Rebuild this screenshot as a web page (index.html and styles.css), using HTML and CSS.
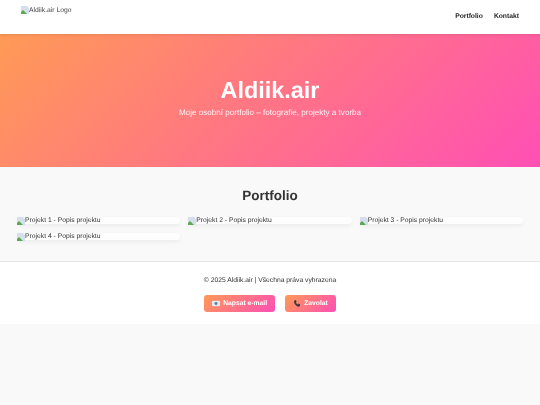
FILE: index.html
```html
<!DOCTYPE html>
<html lang="cs">
<head>
  <meta charset="UTF-8">
  <meta name="viewport" content="width=device-width, initial-scale=1.0">
  <title>Aldiik.air</title>
  <link rel="stylesheet" href="styles.css">
</head>
<body>
  <header class="site-header">
    <div class="logo">
      <svg class="broken-img" viewBox="0 0 8 8"><path d="M0 0h6l2 2v6H0z" fill="#d5deec"/><path d="M0 8V6l2-2 2 2 2 2z" fill="#5aa854"/></svg>Aldiik.air Logo
    </div>
    <nav class="nav">
      <a href="#portfolio">Portfolio</a>
      <a href="#kontakt">Kontakt</a>
    </nav>
  </header>

  <section class="hero">
    <h1>Aldiik.air</h1>
    <p>Moje osobní portfolio – fotografie, projekty a tvorba</p>
  </section>

  <main class="portfolio" id="portfolio">
    <h2>Portfolio</h2>
    <div class="grid">
      <div class="card"><svg class="broken-img" viewBox="0 0 8 8"><path d="M0 0h6l2 2v6H0z" fill="#d5deec"/><path d="M0 8V6l2-2 2 2 2 2z" fill="#5aa854"/></svg>Projekt 1 - Popis projektu</div>
      <div class="card"><svg class="broken-img" viewBox="0 0 8 8"><path d="M0 0h6l2 2v6H0z" fill="#d5deec"/><path d="M0 8V6l2-2 2 2 2 2z" fill="#5aa854"/></svg>Projekt 2 - Popis projektu</div>
      <div class="card"><svg class="broken-img" viewBox="0 0 8 8"><path d="M0 0h6l2 2v6H0z" fill="#d5deec"/><path d="M0 8V6l2-2 2 2 2 2z" fill="#5aa854"/></svg>Projekt 3 - Popis projektu</div>
      <div class="card"><svg class="broken-img" viewBox="0 0 8 8"><path d="M0 0h6l2 2v6H0z" fill="#d5deec"/><path d="M0 8V6l2-2 2 2 2 2z" fill="#5aa854"/></svg>Projekt 4 - Popis projektu</div>
    </div>
  </main>

  <footer class="site-footer" id="kontakt">
    <p>© 2025 Aldiik.air | Všechna práva vyhrazena</p>
    <div class="buttons">
      <a class="btn" href="#"><svg class="btn-icon" viewBox="0 0 10 8"><rect width="10" height="7" y=".5" rx="1" fill="#dfe9f2"/><circle cx="5" cy="4" r="1.8" fill="#5c7f9c"/></svg>Napsat e-mail</a>
      <a class="btn" href="#"><svg class="btn-icon phone" viewBox="0 0 8 8"><path d="M1 .5 2.6 0l1 2-1 .9c.4.9 1.200 1.700 2.100 2.100l.9-1 2 1L7.200 6.800C6.800 8 5 8 3 6.300 1 4.600 0 2 1 .5z" fill="#3a3a3a"/></svg>Zavolat</a>
    </div>
  </footer>
</body>
</html>
```

FILE: styles.css
```css
/* General */
body {
  margin: 0;
  font-family: "Liberation Sans", Arial, sans-serif;
  background-color: #f9f9f9;
  color: #333;
  text-rendering: geometricPrecision;
  filter: blur(0.3px);
}

.broken-img {
  width: 8px;
  height: 8px;
  flex: none;
}

/* Header */
.site-header {
  display: flex;
  justify-content: space-between;
  height: 34px;
  padding: 0 21px;
  background-color: #fff;
  box-shadow: 0 1px 3px rgba(0, 0, 0, 0.1);
  position: relative;
}

.logo {
  display: flex;
  align-items: flex-start;
  padding-top: 6px;
  font-size: 6.75px;
  line-height: 9px;
  color: #444;
}

.nav {
  display: flex;
  gap: 11px;
  padding-top: 12px;
}

.nav a {
  font-size: 6.75px;
  line-height: 9px;
  font-weight: bold;
  color: #222;
  text-decoration: none;
}

/* Hero */
.hero {
  height: 133px;
  box-sizing: border-box;
  padding-top: 41px;
  text-align: center;
  color: #fff;
  background: linear-gradient(135deg, #ff9a56, #ff4fb5);
}

.hero h1 {
  margin: 0 0 2px;
  font-size: 23.4px;
  line-height: 30px;
}

.hero p {
  margin: 0;
  font-size: 8.1px;
  line-height: 12px;
  opacity: 0.9;
}

/* Portfolio */
.portfolio {
  padding: 20px 17px 21px;
}

.portfolio h2 {
  margin: 0 0 13px;
  font-size: 13.5px;
  line-height: 17px;
  text-align: center;
  color: #333;
}

.grid {
  display: grid;
  grid-template-columns: repeat(3, 1fr);
  gap: 9px 8px;
}

.card {
  display: flex;
  align-items: center;
  height: 7px;
  background-color: #fdfdfd;
  border-radius: 6px;
  box-shadow: 0 2px 5px rgba(0, 0, 0, 0.06);
  font-size: 6.75px;
  line-height: 7px;
  color: #333;
  white-space: nowrap;
}

/* Footer */
.site-footer {
  height: 63px;
  box-sizing: border-box;
  padding-top: 14px;
  text-align: center;
  background-color: #fff;
  border-top: 1px solid #e5e5e5;
}

.site-footer p {
  margin: 0 0 10px;
  font-size: 6.75px;
  line-height: 9px;
  color: #333;
}

.buttons {
  display: flex;
  justify-content: center;
  gap: 10px;
}

.btn {
  display: flex;
  align-items: center;
  gap: 3px;
  height: 17px;
  padding: 0 8px;
  border-radius: 3px;
  background: linear-gradient(135deg, #ff9a56, #ff4fb5);
  color: #fff;
  font-size: 6.75px;
  font-weight: bold;
  text-decoration: none;
}

.btn-icon {
  width: 8px;
  height: 7px;
}
```
